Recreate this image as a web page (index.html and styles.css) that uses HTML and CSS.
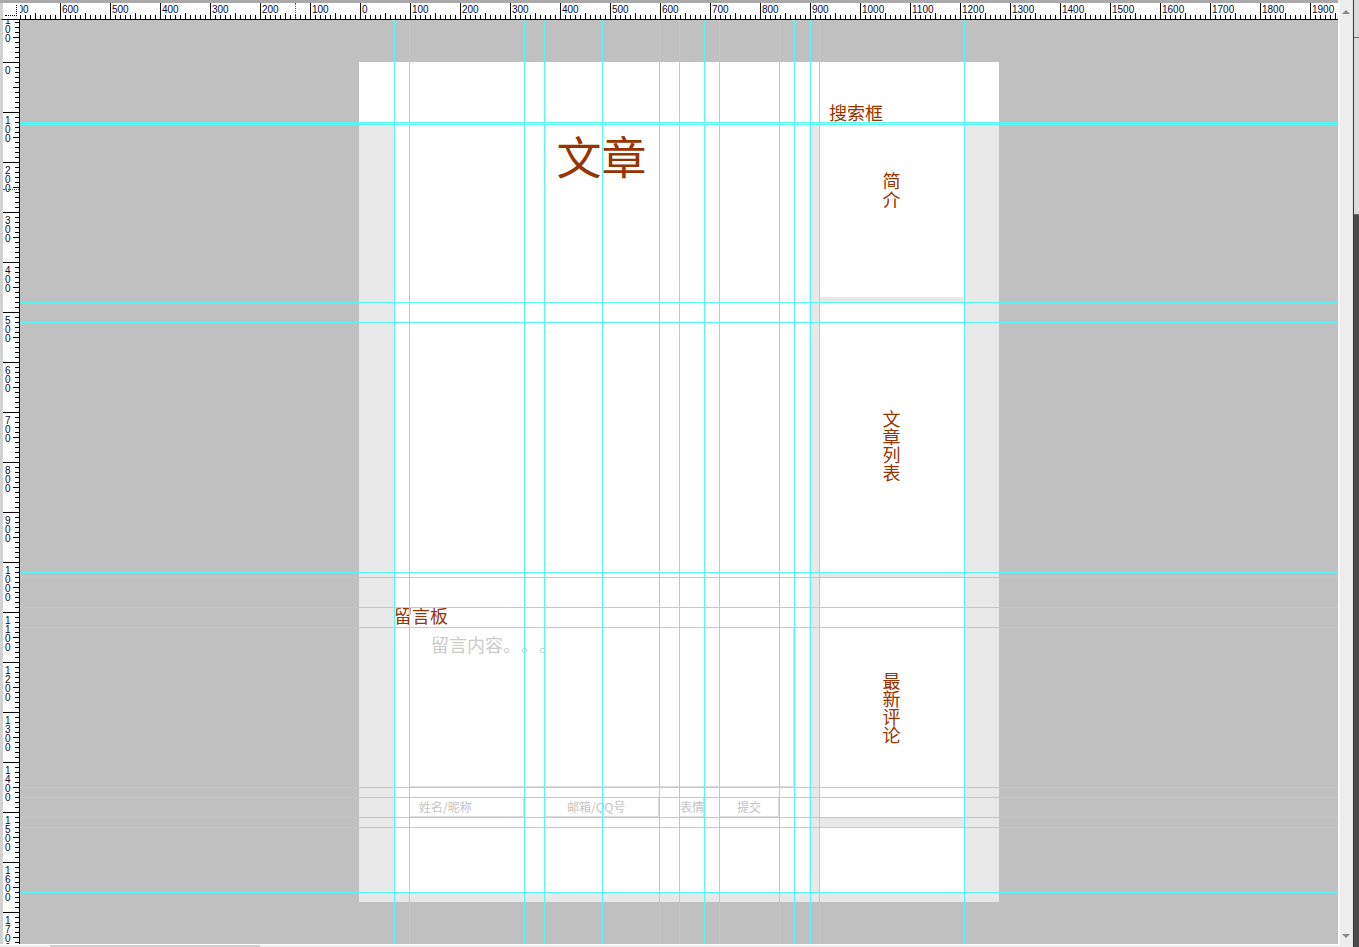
FILE: index.html
```html
<!DOCTYPE html>
<html lang="zh-CN">
<head>
<meta charset="utf-8">
<title>页面布局</title>
<link rel="stylesheet" href="styles.css">
</head>
<body>
<div class="app">
  <div class="work">
    <div class="toprow">
      <div class="corner"><div class="corner-mark"></div></div>
      <div class="hruler">
        <div class="hstrip">
          <span class="hseg">700</span><span class="hseg">600</span><span class="hseg">500</span><span class="hseg">400</span><span class="hseg">300</span><span class="hseg">200</span><span class="hseg">100</span><span class="hseg">0</span><span class="hseg">100</span><span class="hseg">200</span><span class="hseg">300</span><span class="hseg">400</span><span class="hseg">500</span><span class="hseg">600</span><span class="hseg">700</span><span class="hseg">800</span><span class="hseg">900</span><span class="hseg">1000</span><span class="hseg">1100</span><span class="hseg">1200</span><span class="hseg">1300</span><span class="hseg">1400</span><span class="hseg">1500</span><span class="hseg">1600</span><span class="hseg">1700</span><span class="hseg">1800</span><span class="hseg">1900</span><span class="hseg"></span>
        </div>
        <div class="hcursor"></div>
      </div>
    </div>
    <div class="mainrow">
      <div class="vruler">
        <div class="vstrip">
          <div class="vseg"><span>1</span><span>0</span><span>0</span></div>
          <div class="vseg"><span>0</span></div>
          <div class="vseg"><span>1</span><span>0</span><span>0</span></div>
          <div class="vseg"><span>2</span><span>0</span><span>0</span></div>
          <div class="vseg"><span>3</span><span>0</span><span>0</span></div>
          <div class="vseg"><span>4</span><span>0</span><span>0</span></div>
          <div class="vseg"><span>5</span><span>0</span><span>0</span></div>
          <div class="vseg"><span>6</span><span>0</span><span>0</span></div>
          <div class="vseg"><span>7</span><span>0</span><span>0</span></div>
          <div class="vseg"><span>8</span><span>0</span><span>0</span></div>
          <div class="vseg"><span>9</span><span>0</span><span>0</span></div>
          <div class="vseg"><span>1</span><span>0</span><span>0</span><span>0</span></div>
          <div class="vseg"><span>1</span><span>1</span><span>0</span><span>0</span></div>
          <div class="vseg"><span>1</span><span>2</span><span>0</span><span>0</span></div>
          <div class="vseg"><span>1</span><span>3</span><span>0</span><span>0</span></div>
          <div class="vseg"><span>1</span><span>4</span><span>0</span><span>0</span></div>
          <div class="vseg"><span>1</span><span>5</span><span>0</span><span>0</span></div>
          <div class="vseg"><span>1</span><span>6</span><span>0</span><span>0</span></div>
          <div class="vseg"><span>1</span><span>7</span><span>0</span><span>0</span></div>
          <div class="vseg"></div>
        </div>
        <div class="vcursor"></div>
      </div>
      <div class="canvas">
        <div class="page">
          <div class="page-head">
            <div class="head-main"></div>
            <div class="head-side">搜索框</div>
          </div>
          <div class="page-body">
            <div class="main-col">
              <div class="article"><h1 class="article-title">文章</h1></div>
              <div class="board">
                <h2 class="board-title">留言板</h2>
                <div class="board-text">留言内容。。。</div>
                <div class="board-form">
                  <div class="field f-name">姓名/昵称</div>
                  <div class="field f-mail">邮箱/QQ号</div>
                  <div class="field f-face">表情</div>
                  <div class="field f-submit">提交</div>
                </div>
              </div>
            </div>
            <div class="side-col">
              <div class="side-box box-intro"><span class="vtext">简介</span></div>
              <div class="side-box box-list"><span class="vtext">文章列表</span></div>
              <div class="side-box box-comments"><span class="vtext">最新评论</span></div>
              <div class="side-box box-empty"></div>
            </div>
          </div>
        </div>
        <div class="guides">
          <i class="gv" style="left:374px"></i>
          <i class="gv" style="left:389px"></i>
          <i class="gv" style="left:504px"></i>
          <i class="gv" style="left:524px"></i>
          <i class="gv" style="left:582px"></i>
          <i class="gv" style="left:639px"></i>
          <i class="gv" style="left:659px"></i>
          <i class="gv" style="left:684px"></i>
          <i class="gv" style="left:699px"></i>
          <i class="gv" style="left:759px"></i>
          <i class="gv" style="left:774px"></i>
          <i class="gv" style="left:790px"></i>
          <i class="gv" style="left:799px"></i>
          <i class="gv" style="left:944px"></i>
          <i class="gh" style="top:102px"></i>
          <i class="gh" style="top:104px"></i>
          <i class="gh" style="top:282px"></i>
          <i class="gh" style="top:302px"></i>
          <i class="gh" style="top:552px"></i>
          <i class="gh" style="top:557px"></i>
          <i class="gh" style="top:587px"></i>
          <i class="gh" style="top:607px"></i>
          <i class="gh" style="top:767px"></i>
          <i class="gh" style="top:777px"></i>
          <i class="gh" style="top:797px"></i>
          <i class="gh" style="top:807px"></i>
          <i class="gh" style="top:872px"></i>
        </div>
      </div>
    </div>
    <div class="hscroll"><div class="hthumb"></div></div>
  </div>
  <div class="vscroll">
    <span class="arrow-up"></span>
    <span class="arrow-down"></span>
  </div>
  <div class="panel">
    <div class="panel-top"></div>
    <div class="panel-mid"></div>
  </div>
</div>
</body>
</html>
```

FILE: styles.css
```css
* { box-sizing: border-box; }
html, body { margin: 0; padding: 0; }
body {
  width: 1359px;
  height: 947px;
  overflow: hidden;
  background: #c0c0c0;
  font-family: "Noto Sans CJK SC", "Noto Sans", sans-serif;
  text-spacing-trim: space-all;
}

.app { display: flex; width: 1359px; height: 947px; }
.work { width: 1338px; display: flex; flex-direction: column; }

/* ---------- top ruler ---------- */
.toprow {
  height: 20px;
  display: flex;
  border-top: 3px solid #a9a9a9;
}
.corner {
  width: 20px;
  background: #fff;
  border-left: 3px solid #d2d2d2;
  border-bottom: 1px solid #000;
  padding: 2px 0 0 2px;
}
.corner-mark {
  width: 12px;
  height: 11px;
  border-right: 1px dotted #000;
  border-bottom: 1px dotted #000;
}
.hruler {
  flex: 1;
  position: relative;
  overflow: hidden;
  background: #fff;
  border-bottom: 1px solid #000;
}
.hstrip {
  display: flex;
  height: 100%;
  margin-left: -10px;
  width: 1400px;
  background:
    repeating-linear-gradient(to right, transparent 0 25px, #000 25px 26px, transparent 26px 50px) left bottom / 100% 6px no-repeat,
    repeating-linear-gradient(to right, #000 0 1px, transparent 1px 5px) left bottom / 100% 4px no-repeat;
}
.hseg {
  flex: 0 0 50px;
  height: 100%;
  border-left: 1px solid #000;
  padding: 2px 0 0 1px;
  font: 10px/10px "Liberation Sans", Arial, sans-serif;
  color: #0a0a30;
}
.hcursor {
  position: absolute;
  left: 275px;
  top: 0;
  height: 16px;
  border-left: 1px dotted #555;
}

/* ---------- left ruler + canvas ---------- */
.mainrow { display: flex; height: 924px; }
.vruler {
  width: 20px;
  position: relative;
  overflow: hidden;
  background: #fff;
  border-left: 3px solid #d2d2d2;
  border-right: 1px solid #000;
}
.vstrip {
  margin-top: -8px;
  background:
    repeating-linear-gradient(to bottom, transparent 0 25px, #000 25px 26px, transparent 26px 50px) right top / 6px 100% no-repeat,
    repeating-linear-gradient(to bottom, #000 0 1px, transparent 1px 5px) right top / 4px 100% no-repeat;
}
.vseg {
  height: 50px;
  border-top: 1px solid #000;
  padding: 3px 0 0 2px;
  display: flex;
  flex-direction: column;
  font: 10px/9px "Liberation Sans", Arial, sans-serif;
  color: #0a0a30;
}
.vcursor {
  position: absolute;
  left: 0;
  top: 169px;
  width: 16px;
  border-top: 1px dotted #555;
}

.canvas {
  flex: 1;
  position: relative;
  overflow: hidden;
  background: #c0c0c0;
  padding: 42px 0 0 339px;
}

/* ---------- page ---------- */
.page {
  width: 640px;
  height: 840px;
  background: #fff;
  display: flex;
  flex-direction: column;
}
.page-head {
  height: 60px;
  display: flex;
  padding: 0 35px;
}
.head-main { width: 415px; }
.head-side {
  margin-left: 10px;
  padding: 41px 0 0 10px;
  font-size: 18px;
  line-height: 18px;
  color: #993300;
}
.page-body {
  flex: 1;
  display: flex;
  gap: 10px;
  padding: 0 35px 10px;
  background: #e8e8e8;
}
.main-col {
  width: 415px;
  background: #fff;
  display: flex;
  flex-direction: column;
}
.article { height: 455px; padding-top: 11px; }
.article-title {
  margin: 0;
  text-align: center;
  font-size: 45px;
  line-height: 45px;
  font-weight: normal;
  color: #993300;
}
.board { display: flex; flex-direction: column; }
.board-title {
  margin: 29px 0 0;
  font-size: 18px;
  line-height: 18px;
  font-weight: normal;
  color: #993300;
}
.board-text {
  margin: 3px 0 0 15px;
  width: 385px;
  height: 160px;
  border: 1px solid #dcdcdc;
  padding: 7px 0 0 21px;
  font-size: 18px;
  line-height: 18px;
  color: #cccccc;
  text-spacing-trim: space-all;
}
.board-form {
  display: flex;
  margin: 10px 0 0 15px;
  height: 20px;
}
.field {
  height: 20px;
  border: 1px solid #dcdcdc;
  font-size: 12px;
  line-height: 17px;
  color: #c4c4c4;
  white-space: nowrap;
}
.f-name { width: 115px; padding-left: 9px; }
.f-mail { width: 115px; margin-left: 20px; padding-left: 22px; }
.f-face { width: 25px; margin-left: 20px; padding-left: 0; overflow: visible; }
.f-submit { width: 60px; margin-left: 15px; text-align: center; }

.side-col {
  width: 145px;
  display: flex;
  flex-direction: column;
}
.side-box { background: #fff; }
.box-intro { height: 175px; padding-top: 49px; }
.box-list { height: 270px; margin-top: 5px; padding-top: 107px; }
.box-comments { height: 240px; margin-top: 5px; padding-top: 94px; }
.box-empty { flex: 1; margin-top: 10px; }
.vtext {
  display: block;
  width: 18px;
  margin: 0 auto;
  font-size: 18px;
  line-height: 18px;
  color: #993300;
}
.box-intro .vtext { line-height: 19px; }

/* ---------- guides ---------- */
.guides { position: absolute; inset: 0; pointer-events: none; }
.gv { position: absolute; top: 0; bottom: 0; width: 1px; background: #55f7f7; }
.gh { position: absolute; left: 0; right: 0; height: 1px; background: #55f7f7; }

/* ---------- scrollbars / side panel ---------- */
.hscroll {
  height: 3px;
  background: #efefef;
  border-top: 1px solid #fff;
  position: relative;
}
.hthumb { margin-left: 50px; width: 210px; height: 2px; background: #cfcfcf; }
.vscroll {
  width: 15px;
  background: #ededed;
  border-left: 2px solid #f8f8f8;
  border-right: 1px solid #e2e2e2;
  display: flex;
  flex-direction: column;
  justify-content: space-between;
  align-items: center;
  padding: 10px 0 9px;
}
.arrow-up {
  width: 0; height: 0;
  border-left: 4px solid transparent;
  border-right: 4px solid transparent;
  border-bottom: 4px solid #8a8a8a;
}
.arrow-down {
  width: 0; height: 0;
  border-left: 4px solid transparent;
  border-right: 4px solid transparent;
  border-top: 4px solid #8a8a8a;
}
.panel {
  width: 6px;
  background: #4b4b4b;
  border-left: 1px solid #3a3a3a;
  display: flex;
  flex-direction: column;
}
.panel-top { height: 38px; background: #dadada; border-bottom: 1px solid #6a6a6a; }
.panel-mid { height: 177px; background: #dadada; border-bottom: 1px solid #6a6a6a; }
```
